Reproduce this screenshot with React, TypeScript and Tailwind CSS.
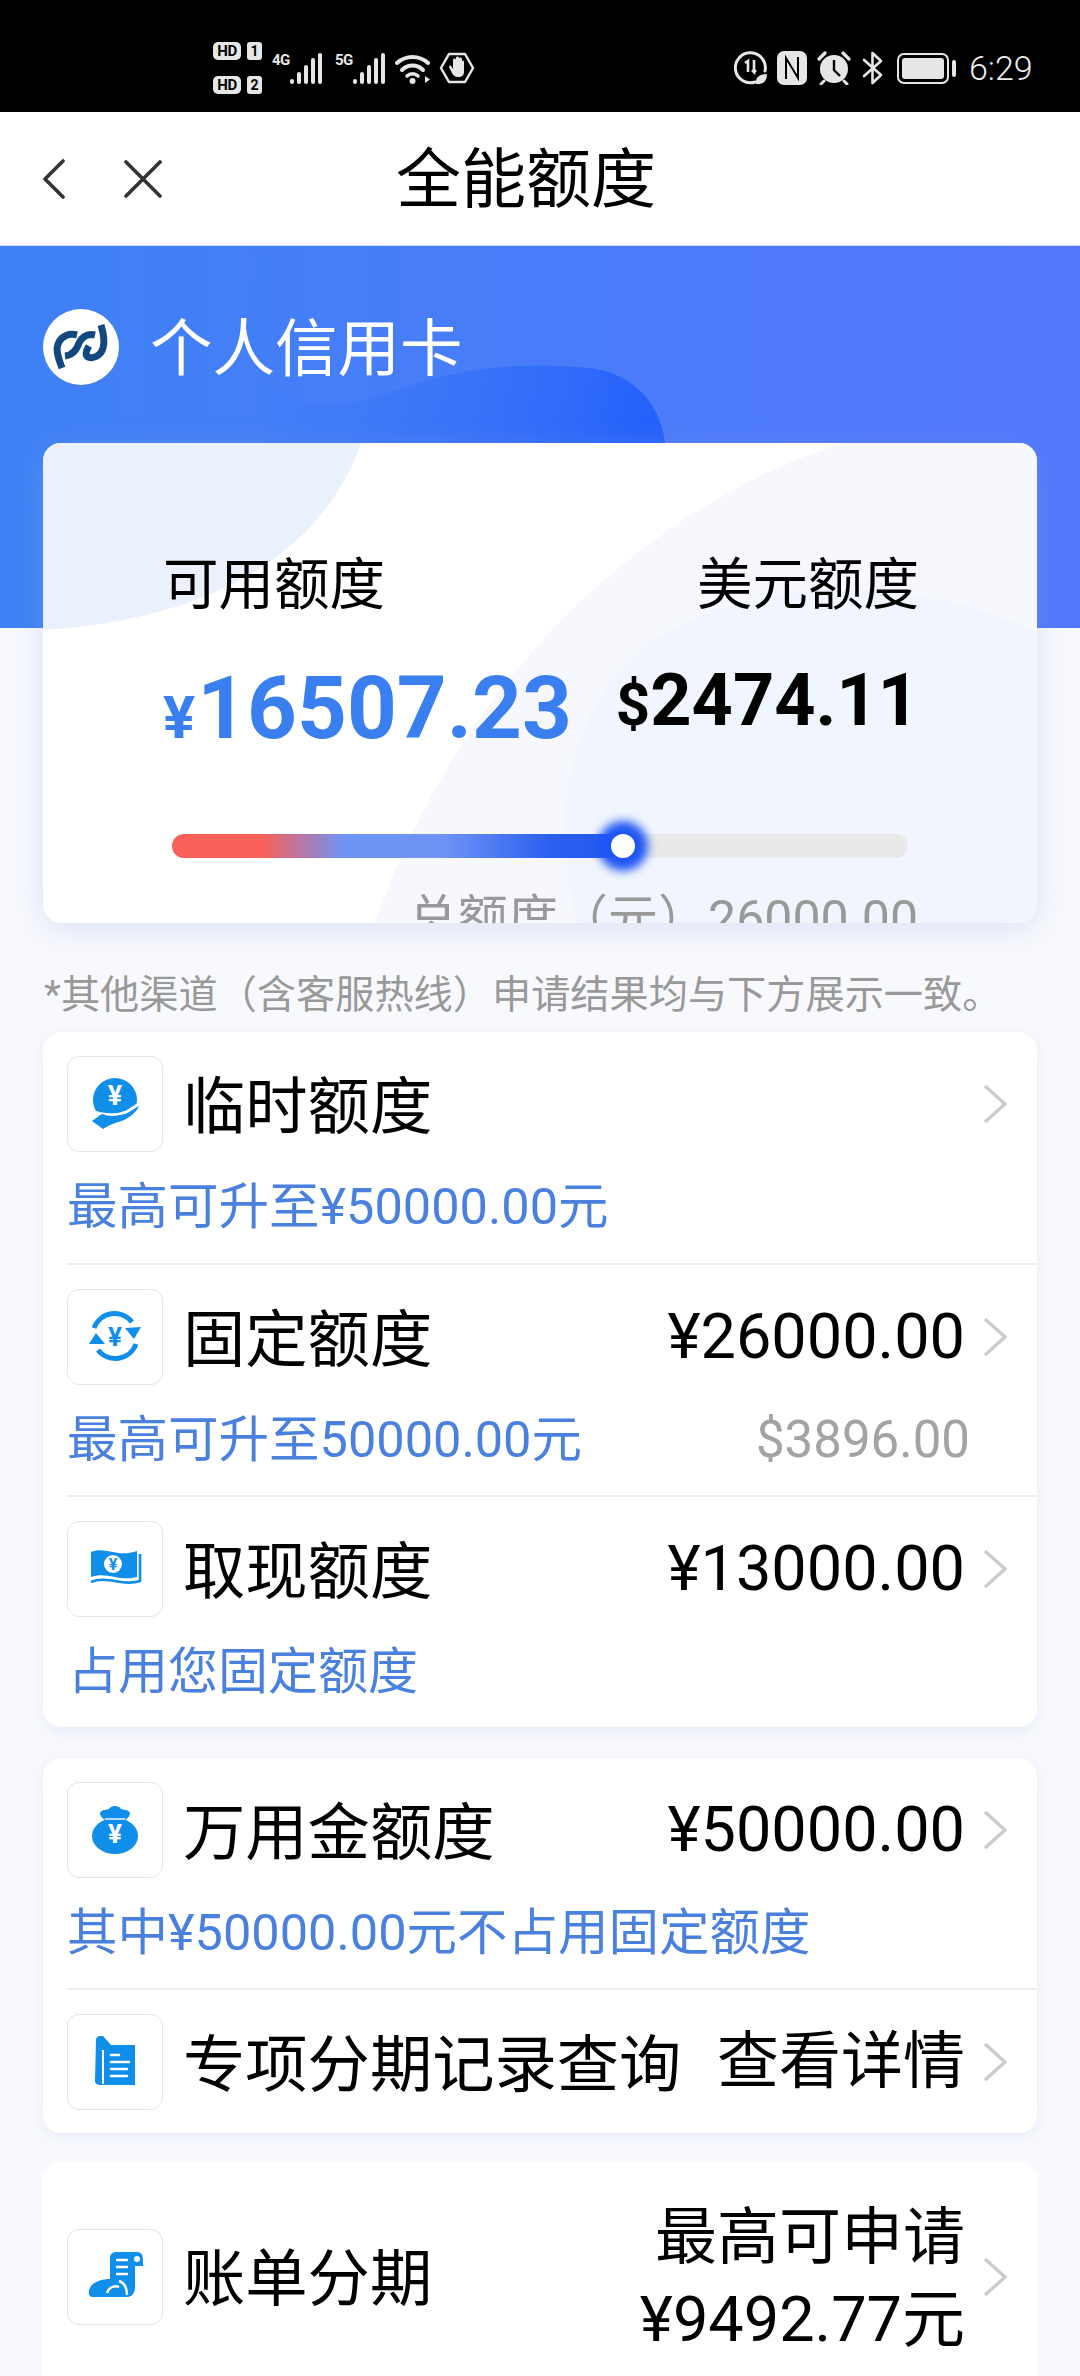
import React from "react";

const BLUE = "#0f8eea";

function HdBadge({ n }: { n: string }) {
  return (
    <div className="flex items-center gap-[6px] h-[18px]">
      <span className="w-[28px] h-[18px] rounded-[5px] bg-[#e6e6e6] text-black text-[15px] leading-[18px] font-bold text-center tracking-[-0.5px]">HD</span>
      <span className="w-[15px] h-[18px] rounded-[3px] bg-[#e6e6e6] text-black text-[14px] leading-[18px] font-bold text-center">{n}</span>
    </div>
  );
}

function Signal({ label }: { label: string }) {
  return (
    <div className="flex items-start h-[31px] w-[50px] shrink-0">
      <span className="text-[#e6e6e6] text-[15px] leading-[14px] font-bold w-[18px] shrink-0 tracking-[-0.5px]">{label}</span>
      <svg width="32" height="31" viewBox="0 0 32 31" className="shrink-0">
        <rect x="0" y="26" width="4" height="5" rx="2" fill="#e6e6e6" />
        <rect x="7" y="19" width="4" height="12" rx="2" fill="#e6e6e6" />
        <rect x="14" y="12" width="4" height="19" rx="2" fill="#e6e6e6" />
        <rect x="21" y="5" width="4" height="26" rx="2" fill="#e6e6e6" />
        <rect x="28" y="0" width="4" height="31" rx="2" fill="#e6e6e6" />
      </svg>
    </div>
  );
}

function StatusBar() {
  return (
    <div className="h-[112px] bg-black flex items-center pt-[24px] pl-[213px] pr-[46px] text-[#e6e6e6]">
      <div className="flex flex-col gap-[16px] w-[59px] shrink-0">
        <HdBadge n="1" />
        <HdBadge n="2" />
      </div>
      <div className="flex gap-[13px] shrink-0">
        <Signal label="4G" />
        <Signal label="5G" />
      </div>
      <svg width="37" height="32" viewBox="0 0 37 32" className="ml-[10px] shrink-0">
        <path d="M2 11C11 3 24 3 33 11" fill="none" stroke="#e6e6e6" strokeWidth="4" strokeLinecap="round" />
        <path d="M7 18C13 12 22 12 28 18" fill="none" stroke="#e6e6e6" strokeWidth="4" strokeLinecap="round" />
        <path d="M12 24C15 21 20 21 23 24" fill="none" stroke="#e6e6e6" strokeWidth="3.5" strokeLinecap="round" />
        <circle cx="17.5" cy="29" r="3" fill="#e6e6e6" />
        <path d="M30 24v7l5-3.5z" fill="#e6e6e6" />
      </svg>
      <svg width="36" height="32" viewBox="0 0 36 32" className="ml-[7px] shrink-0">
        <path d="M10 2H26L34 16L26 30H10L2 16Z" fill="none" stroke="#e6e6e6" strokeWidth="2.5" strokeLinejoin="round" />
        <path d="M10 15l3 6c1 2 3 4 6 4c4 0 6-2 6-5V10c0-2-2-2-2 0v4V7c0-2-3-2-3 0v7V6c0-2-3-2-3 0v8V8c0-2-3-2-3 0v9l-2-3c-1-1-2 0-2 1z" fill="#e6e6e6" />
      </svg>
      <div className="flex-1" />
      <svg width="34" height="34" viewBox="0 0 34 34">
        <path d="M21 31A15 15 0 1 1 31 20" fill="none" stroke="#e6e6e6" strokeWidth="3" strokeLinecap="round" />
        <path d="M11 12l3-2v11M20 9v12l-2-2M20 21l2-2" fill="none" stroke="#e6e6e6" strokeWidth="2.6" />
        <path d="M22 33c-1-6 3-10 11-10c0 7-4 11-11 10z" fill="#e6e6e6" />
      </svg>
      <svg width="30" height="34" viewBox="0 0 30 34" className="ml-[9px]">
        <rect x="0" y="0" width="30" height="34" rx="7" fill="#e6e6e6" />
        <path d="M9 28V7l12 20V6" fill="none" stroke="#000" strokeWidth="2" />
      </svg>
      <svg width="34" height="34" viewBox="0 0 34 34" className="ml-[10px]">
        <circle cx="17" cy="18" r="14" fill="#e6e6e6" />
        <path d="M17 9v10l6 6" fill="none" stroke="#000" strokeWidth="2.4" />
        <path d="M2 8L8 2M32 8L26 2" stroke="#e6e6e6" strokeWidth="3.2" strokeLinecap="round" />
        <path d="M7 30l-3 3M27 30l3 3" stroke="#e6e6e6" strokeWidth="3" strokeLinecap="round" />
      </svg>
      <svg width="22" height="36" viewBox="0 0 22 36" className="ml-[11px]">
        <path d="M2 10L19 25L10.5 33V3L19 11L2 26" fill="none" stroke="#e6e6e6" strokeWidth="2.6" strokeLinejoin="round" strokeLinecap="round" />
      </svg>
      <div className="ml-[13px] w-[52px] h-[31px] rounded-[7px] border-[2.5px] border-[#e6e6e6] p-[3px]">
        <div className="w-full h-full rounded-[3px] bg-[#e6e6e6]" />
      </div>
      <div className="ml-[3px] w-[4px] h-[17px] rounded-[2px] bg-[#e6e6e6]" />
      <span className="ml-[13px] text-[34px] leading-none font-light w-[65px] text-[#ededed] whitespace-nowrap">6:29</span>
    </div>
  );
}

function NavBar() {
  return (
    <div className="h-[133px] bg-white flex items-center pl-[43px]">
      <svg width="22" height="40" viewBox="0 0 22 40">
        <path d="M20 2L2 20L20 38" fill="none" stroke="#333" strokeWidth="3.6" strokeLinecap="round" strokeLinejoin="round" />
      </svg>
      <svg width="38" height="38" viewBox="0 0 38 38" className="ml-[59px]">
        <path d="M2 2L36 36M36 2L2 36" fill="none" stroke="#333" strokeWidth="3.6" strokeLinecap="round" />
      </svg>
      <span className="ml-[234px] text-[65px] leading-[80px] text-black mt-[2px]">全能额度</span>
    </div>
  );
}

function Logo() {
  return (
    <div className="w-[76px] h-[76px] rounded-full bg-white shrink-0">
      <svg width="76" height="76" viewBox="0 0 76 76">
        <path d="M19 59C15 48 12 40 16 33C19 27 26 24 34 26" fill="none" stroke="#12477f" strokeWidth="7" />
        <path d="M52 26C44 24 39 28 36 34C34 40 30 46 22 47" fill="none" stroke="#12477f" strokeWidth="7" />
        <path d="M58 16C61 26 62 33 60 39C58 47 50 50 45 48C42 46 43 42 46 37" fill="none" stroke="#12477f" strokeWidth="7" />
      </svg>
    </div>
  );
}

function Hero() {
  return (
    <div className="relative h-[383px] bg-gradient-to-r from-[#3e81f5] to-[#5377fc] overflow-hidden border-t border-[#cfe0fb]">
      <svg className="absolute inset-0" width="1080" height="383" viewBox="0 0 1080 383">
        <defs>
          <linearGradient id="blob" x1="0" y1="0" x2="1" y2="0.2">
            <stop offset="0" stopColor="#3d7ff6" stopOpacity="0.15" />
            <stop offset="1" stopColor="#1c5bfb" />
          </linearGradient>
        </defs>
        <path d="M265 0C245 50 240 100 262 130C290 165 345 165 385 148C450 122 520 115 590 122C650 130 672 180 665 230V383H265Z" fill="url(#blob)" opacity="0.8" />
      </svg>
      <div className="relative flex items-center pl-[43px] pt-[60px]">
        <Logo />
        <span className="ml-[31px] text-[62.5px] leading-[76px] text-white mt-[6px]">个人信用卡</span>
      </div>
    </div>
  );
}

function Summary() {
  return (
    <div className="relative -mt-[185px] mx-[43px] h-[480px] rounded-[18px] bg-white overflow-hidden shadow-[0_6px_30px_rgba(150,170,225,0.28)]">
      <svg className="absolute inset-0" width="994" height="480" viewBox="0 0 994 480">
        <path d="M0 0H318C285 95 190 175 0 187Z" fill="#eaf1fd" />
        <path d="M800 0C640 50 430 200 332 480H994V0Z" fill="#f6f8fe" />
        <path d="M535 480C505 380 520 240 640 180C740 130 900 140 994 190V480Z" fill="#f1f5fd" />
      </svg>
      <div className="relative flex justify-between pt-[113px] pl-[120px] pr-[118px]">
        <div className="flex flex-col">
          <span className="text-[55.5px] leading-[60px] text-black">可用额度</span>
          <div className="mt-[47px] flex items-baseline text-[#3a7ff0] font-bold">
            <span className="text-[60px] leading-[90px]">¥</span>
            <span className="text-[87px] leading-[90px] ml-[2px]">16507.23</span>
          </div>
        </div>
        <div className="flex flex-col items-end">
          <span className="text-[55.5px] leading-[60px] text-black">美元额度</span>
          <div className="mt-[40px] flex items-baseline text-black font-bold">
            <span className="text-[60px] leading-[90px]">$</span>
            <span className="text-[72px] leading-[90px]">2474.11</span>
          </div>
        </div>
      </div>
      <div className="relative mt-[71px] ml-[129px] w-[736px] h-[24px] rounded-full bg-[#e9e9e9]">
        <div className="h-full w-[452px] rounded-full bg-[linear-gradient(90deg,#f9605a_0%,#f9605a_20%,#6f93f5_38%,#6f93f5_60%,#2a5ff0_84%,#2259f2_100%)]" />
        <div className="absolute left-[439px] top-0 w-[24px] h-[24px] rounded-full bg-white shadow-[0_0_10px_13px_#1f56f3]" />
      </div>
      <div className="relative mt-[31px] pr-[119px] text-right text-[50px] leading-[60px] text-[#999999]">总额度（元）26000.00</div>
    </div>
  );
}

function IconBox({ children }: { children: React.ReactNode }) {
  return (
    <div className="w-[96px] h-[96px] rounded-[12px] border border-[#e4e4e4] bg-white shrink-0">
      <svg width="94" height="94" viewBox="1 1 94 94">{children}</svg>
    </div>
  );
}

const YenMark = ({ x, y, size, fill }: { x: number; y: number; size: number; fill: string }) => (
  <text x={x} y={y} textAnchor="middle" fontSize={size} fontWeight="700" fill={fill} fontFamily="Roboto, sans-serif">¥</text>
);

const HandIcon = () => (
  <IconBox>
    <circle cx="48" cy="44" r="22" fill={BLUE} />
    <YenMark x={48} y={49} size={27} fill="#fff" />
    <path d="M22 54C36 60 50 60 60 56L74 47" fill="none" stroke="#fff" strokeWidth="3.5" />
    <path d="M25 65L35 58C42 61 50 60 58 58C63 56 68 52 72 50C70 56 62 62 54 65C48 67 42 69 36 73Z" fill={BLUE} />
  </IconBox>
);

const CycleIcon = () => (
  <IconBox>
    <path d="M27 39A22 22 0 0 1 65 33" fill="none" stroke={BLUE} strokeWidth="5" />
    <path d="M69 55A22 22 0 0 1 31 61" fill="none" stroke={BLUE} strokeWidth="5" />
    <path d="M58 39L74 38L67 50Z" fill={BLUE} />
    <path d="M22 55L38 55L29 44Z" fill={BLUE} />
    <YenMark x={48} y={57} size={26} fill={BLUE} />
  </IconBox>
);

const NoteIcon = () => (
  <IconBox>
    <path d="M24 31C38 25 50 37 70 30V56C52 61 40 50 24 56Z" fill={BLUE} />
    <circle cx="46" cy="43" r="9" fill="#fff" />
    <YenMark x={46} y={49} size={16} fill={BLUE} />
    <path d="M73 33V60C56 66 40 54 24 61" fill="none" stroke={BLUE} strokeWidth="2.6" />
  </IconBox>
);

const BagIcon = () => (
  <IconBox>
    <ellipse cx="48" cy="54" rx="23" ry="18" fill={BLUE} />
    <path d="M33 31C35 27 40 28 42 27C44 23 52 23 54 27C56 28 61 27 63 31C63 35 58 38 58 38H38C38 38 33 35 33 31Z" fill={BLUE} />
    <path d="M38 37H58" stroke="#fff" strokeWidth="1.4" />
    <YenMark x={48} y={61} size={26} fill="#fff" />
  </IconBox>
);

const FolderIcon = () => (
  <IconBox>
    <path d="M29 26C29 23 31 22 33 22H36L44 31H68V71H36C32 71 28 71 28 67Z" fill={BLUE} />
    <path d="M36 36V70" stroke="#fff" strokeWidth="2" />
    <path d="M44 41H52M44 48H62M44 55H60M44 62H60" stroke="#fff" strokeWidth="2.6" strokeLinecap="round" />
  </IconBox>
);

const ScrollIcon = () => (
  <IconBox>
    <path d="M43 29C43 25 46 23 49 23H70C75 23 76 27 76 31V37H68V58C68 64 65 68 60 68H26C20 68 21 60 25 56C29 52 36 50 43 50Z" fill={BLUE} />
    <path d="M49 31H61M49 38H61M49 45H61" stroke="#fff" strokeWidth="2.6" />
    <circle cx="70" cy="30" r="3" fill="#fff" />
    <path d="M40 64C42 58 48 56 52 58M52 52C58 54 60 60 60 66" fill="none" stroke="#fff" strokeWidth="2.4" />
  </IconBox>
);

function Chevron() {
  return (
    <svg width="24" height="40" viewBox="0 0 24 40" className="shrink-0">
      <path d="M2 2L22 20L2 38" fill="none" stroke="#cccccc" strokeWidth="3.4" />
    </svg>
  );
}

function Sub({ children, className = "" }: { children: React.ReactNode; className?: string }) {
  return <span className={`text-[50.5px] leading-[60px] text-[#4a80de] ${className}`}>{children}</span>;
}

function Row({
  icon,
  title,
  value,
  valueSize = "text-[63px]",
  children,
  className = "",
}: {
  icon: React.ReactNode;
  title: string;
  value?: string;
  valueSize?: string;
  children?: React.ReactNode;
  className?: string;
}) {
  return (
    <div className={`pt-[24px] pl-[24px] ${className}`}>
      <div className="flex items-center h-[96px] pr-[30px]">
        {icon}
        <span className="ml-[20px] text-[62.3px] leading-[76px] text-black mt-[7px] whitespace-nowrap">{title}</span>
        <div className="flex-1" />
        {value && <span className={`${valueSize} leading-[76px] text-black mr-[18px] whitespace-nowrap`}>{value}</span>}
        <Chevron />
      </div>
      {children && <div className="flex justify-between items-center mt-[25px] pr-[67px]">{children}</div>}
    </div>
  );
}

const Divider = () => <div className="ml-[24px] h-[2px] bg-[#eeeeee]" />;

function Cards() {
  return (
    <>
      <div className="mt-[42px] mx-[44px] text-[39.2px] leading-[60px] text-[#999999] whitespace-nowrap">*其他渠道（含客服热线）申请结果均与下方展示一致。</div>
      <div className="mt-[7px] mx-[43px] rounded-[18px] bg-white shadow-[0_4px_14px_rgba(170,185,225,0.2)]">
        <Row icon={<HandIcon />} title="临时额度" className="h-[231px]">
          <Sub>最高可升至¥50000.00元</Sub>
        </Row>
        <Divider />
        <Row icon={<CycleIcon />} title="固定额度" value="¥26000.00" className="h-[230px]">
          <Sub>最高可升至50000.00元</Sub>
          <span className="text-[51px] leading-[60px] text-[#a3a3a3]">$3896.00</span>
        </Row>
        <Divider />
        <Row icon={<NoteIcon />} title="取现额度" value="¥13000.00" className="h-[230px]">
          <Sub className="ml-[1px] text-[50px]">占用您固定额度</Sub>
        </Row>
      </div>
      <div className="mt-[31px] mx-[43px] rounded-[18px] bg-white shadow-[0_4px_14px_rgba(170,185,225,0.2)]">
        <Row icon={<BagIcon />} title="万用金额度" value="¥50000.00" className="h-[230px]">
          <Sub>其中¥50000.00元不占用固定额度</Sub>
        </Row>
        <Divider />
        <Row icon={<FolderIcon />} title="专项分期记录查询" value="查看详情" valueSize="text-[62px]" className="h-[143px]" />
      </div>
      <div className="mt-[29px] mx-[43px] rounded-[18px] bg-white h-[300px] pl-[24px] pr-[30px] pt-[30px]">
        <div className="flex items-center">
          <ScrollIcon />
          <span className="ml-[20px] text-[62.3px] leading-[76px] text-black mt-[6px]">账单分期</span>
          <div className="flex-1" />
          <div className="flex flex-col items-end mt-[5px] mr-[18px] leading-[82px] text-black">
            <span className="text-[62px]">最高可申请</span>
            <span className="text-[63px]">¥9492.77元</span>
          </div>
          <Chevron />
        </div>
      </div>
    </>
  );
}

export default function App() {
  return (
    <div className="w-[1080px] h-[2376px] overflow-hidden bg-[#f8f9fd] font-['Roboto','Noto_Sans_CJK_SC',sans-serif]">
      <StatusBar />
      <NavBar />
      <Hero />
      <Summary />
      <Cards />
    </div>
  );
}
